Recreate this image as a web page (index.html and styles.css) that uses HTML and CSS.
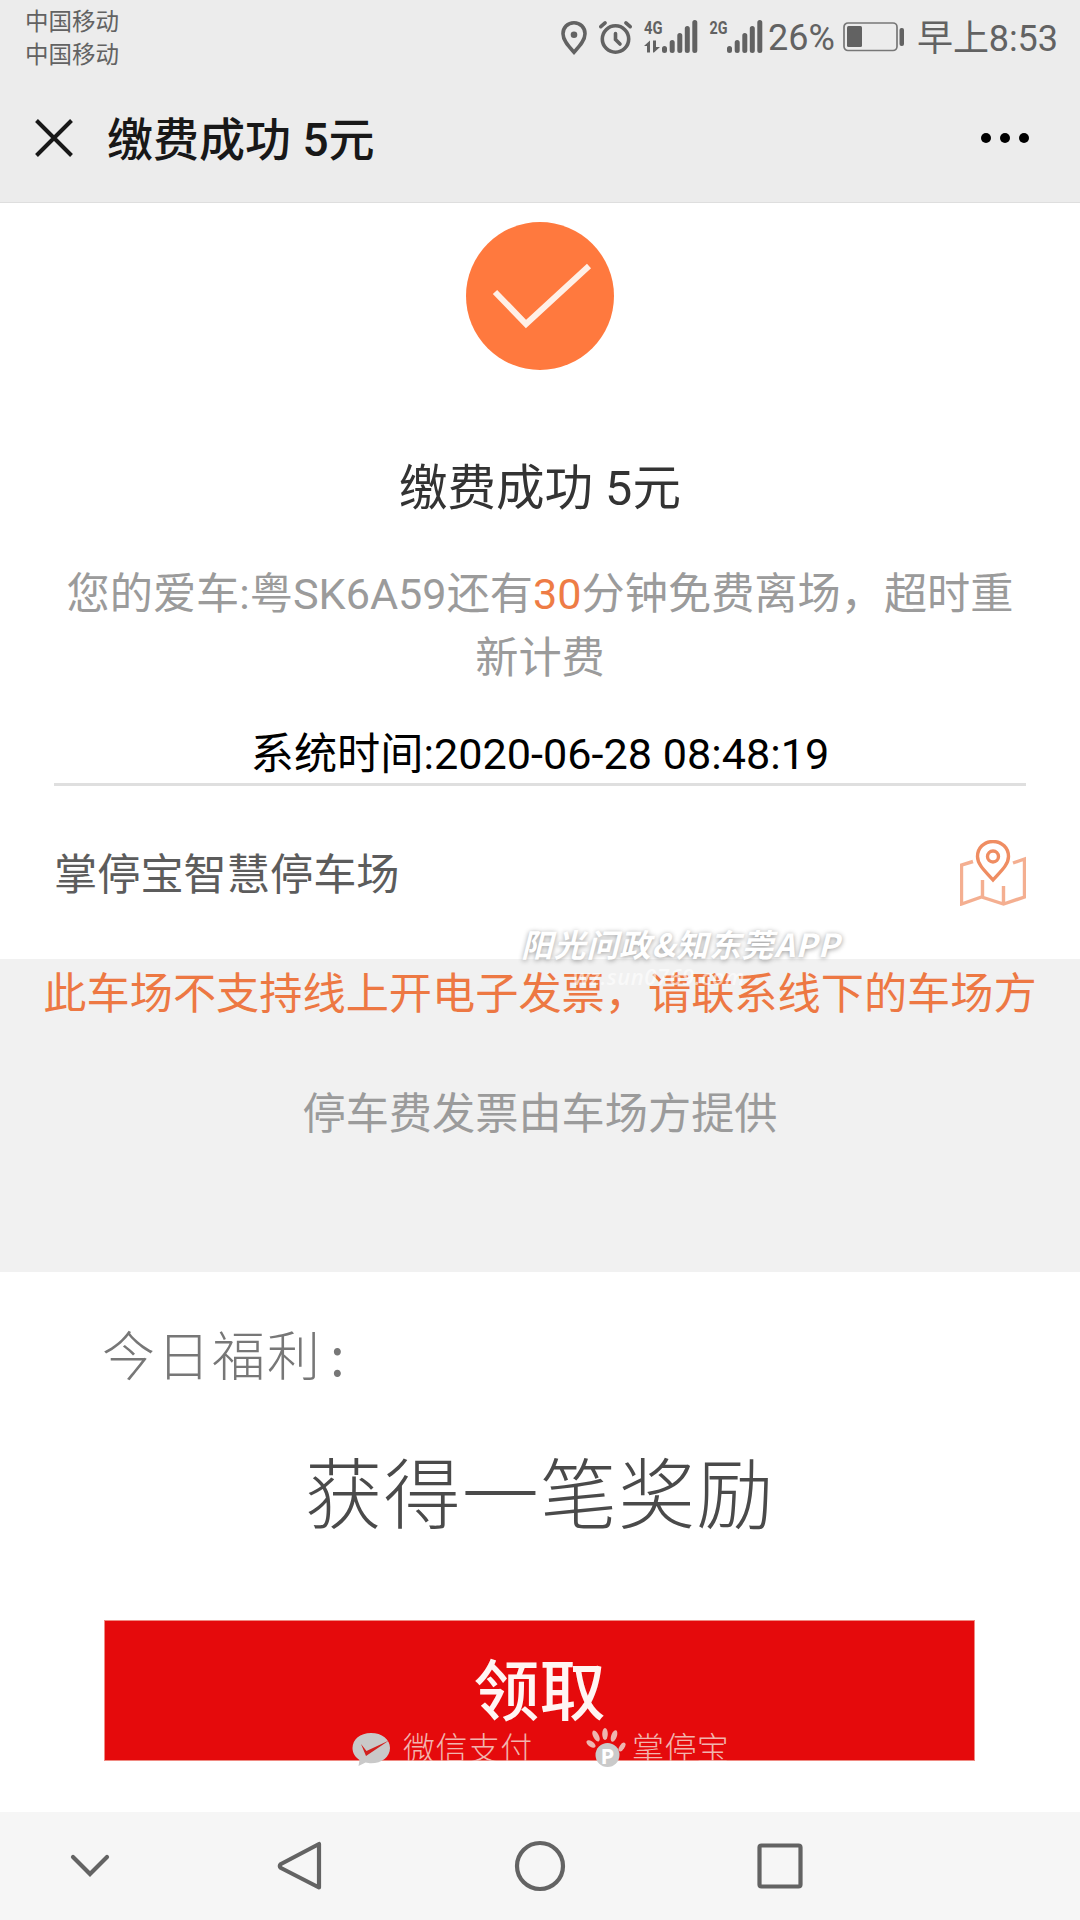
FILE: index.html
```html
<!DOCTYPE html>
<html lang="zh-CN">
<head>
<meta charset="utf-8">
<title>缴费成功 5元</title>
<link rel="stylesheet" href="styles.css">
</head>
<body>
<div class="screen">
  <header class="header">
    <div class="status">
      <div class="carriers"><span>中国移动</span><span>中国移动</span></div>
      <div class="status-right">
        <svg class="indicators" width="208" height="40" viewBox="558 16 208 40">
          <path d="M574 21.7c-6.300 0-11 4.800-11 11 0 7 6 13 11 18.500 5-5.500 11-11.500 11-18.500 0-6.200-4.700-11-11-11z" fill="none" stroke="#626262" stroke-width="3.600"/>
          <circle cx="574" cy="33.700" r="3.300"/>
          <g fill="none" stroke="#626262" stroke-width="3.600" stroke-linecap="round">
            <circle cx="615.500" cy="38" r="13.200"/>
            <path d="M615.500 32.500v6l4.500 4.500M600.800 25.700l4.300-3.800M630.200 25.700l-4.300-3.800"/>
          </g>
          <text x="644" y="33" textLength="18.500" lengthAdjust="spacingAndGlyphs">4G</text>
          <path d="M644 45l6-5.500v12h-3V45zM653 39.500h3V46h4l-6 5.500h-1z"/>
          <path class="bars" d="M664.500 47.500v2M672.200 41.500v8M679.800 34.500v15M687.300 27.500v22M694.800 21.500v28"/>
          <text x="709.500" y="33" textLength="18" lengthAdjust="spacingAndGlyphs">2G</text>
          <path class="bars" d="M729.500 47.500v2M737.200 41.500v8M744.800 34.500v15M752.300 27.500v22M759.800 21.500v28"/>
        </svg>
        <span class="percent">26%</span>
        <svg class="battery" width="62" height="32" viewBox="0 0 62 32">
          <rect x="1" y="2" width="53" height="27.500" rx="4" fill="none" stroke="#777" stroke-width="1.700"/>
          <rect x="4" y="5" width="15" height="21" rx="1.500"/>
          <rect x="56.500" y="7" width="4.500" height="18" rx="2"/>
        </svg>
        <span class="clock">早上8:53</span>
      </div>
    </div>
    <div class="titlebar">
      <svg class="close" width="38" height="38" viewBox="0 0 38 38"><path d="M1.500 1.500l35 35M36.500 1.500l-35 35"/></svg>
      <h1>缴费成功 5元</h1>
      <svg class="more" width="50" height="12" viewBox="0 0 50 12"><circle cx="6" cy="6" r="5"/><circle cx="25" cy="6" r="5"/><circle cx="44" cy="6" r="5"/></svg>
    </div>
  </header>

  <main>
    <section class="result">
      <svg class="success" width="148" height="148" viewBox="0 0 148 148"><circle cx="74" cy="74" r="74"/><path d="M29 70l31 32 63-58"/></svg>
      <h2>缴费成功 5元</h2>
      <p class="notice">您的爱车:粤SK6A59还有<em>30</em>分钟免费离场，超时重新计费</p>
      <p class="time">系统时间:2020-06-28 08:48:19</p>
      <div class="place">
        <span>掌停宝智慧停车场</span>
        <svg width="66" height="66" viewBox="0 0 66 66">
          <path d="M13 21.500L1.500 25v39L21.500 57l22 7L64.500 57V19L53 23M22.500 40v17M43.500 46v18" opacity=".7"/>
          <path d="M33 1.500c-9 0-15.500 6.500-15.500 15C17.500 25 26 32 33 40c7-8 15.500-15 15.500-23.500 0-8.500-6.500-15-15.500-15z"/>
          <circle cx="33" cy="16.500" r="5.500"/>
        </svg>
      </div>
    </section>

    <section class="invoice">
      <p class="warn">此车场不支持线上开电子发票，请联系线下的车场方</p>
      <p class="hint">停车费发票由车场方提供</p>
      <div class="watermark"><span class="wm-name">阳光问政&amp;知东莞APP</span><span class="wm-url">wz.sun0769.com</span></div>
    </section>

    <section class="reward">
      <p class="today">今日福利<span class="colon">:</span></p>
      <p class="prize">获得一笔奖励</p>
      <div class="claim">
        <span class="claim-label">领取</span>
        <div class="brands">
          <svg class="pay" width="40" height="36" viewBox="0 0 40 36"><path d="M19 1C8 1 .5 7.500.5 16c0 5 2.500 9 7 12l-1 6 7-3.500c2 .5 4 .8 5.500.8 11 0 19-6.500 19-15.300S30 1 19 1z" fill="#c9c9c9"/><path d="M9 12l5.500 7L37 8.500 14 24z" fill="#d2201e"/></svg>
          <span class="brand-name wechat">微信支付</span>
          <svg class="paw" width="40" height="40" viewBox="0 0 40 40">
            <g fill="#eeb5b0">
              <ellipse cx="5" cy="16" rx="2.700" ry="5.200" transform="rotate(-55 5 16)"/>
              <ellipse cx="10" cy="8" rx="2.800" ry="6" transform="rotate(-28 10 8)"/>
              <ellipse cx="19" cy="6" rx="2.800" ry="6"/>
              <ellipse cx="28" cy="8" rx="2.800" ry="6" transform="rotate(20 28 8)"/>
              <ellipse cx="36" cy="19" rx="2.500" ry="5" transform="rotate(32 36 19)"/>
            </g>
            <circle cx="21.500" cy="27" r="12" fill="#cacaca"/>
            <text x="14.500" y="35.500">P</text>
          </svg>
          <span class="brand-name">掌停宝</span>
        </div>
      </div>
    </section>
  </main>

  <nav class="navbar">
    <svg width="1080" height="108" viewBox="0 1812 1080 108">
      <path d="M73 1857l17 17 17-17" stroke-linecap="round"/>
      <path d="M319 1844v43.500L281 1868q-2.500-2 0-4z" stroke-linejoin="round"/>
      <circle cx="540" cy="1866" r="23"/>
      <rect x="759.500" y="1845.500" width="41" height="41" rx="2"/>
    </svg>
  </nav>
</div>
</body>
</html>
```
FILE: styles.css
```css
* { box-sizing: border-box; margin: 0; padding: 0; }
body { font-family: Roboto, "Noto Sans CJK SC", sans-serif; background: #fff; font-size: 43.2px; }
svg { display: block; flex: none; }
p, span { white-space: nowrap; }
.screen { width: 1080px; height: 1920px; display: flex; flex-direction: column; overflow: hidden; }

.header { height: 203px; background: #ececec; border-bottom: 1px solid #dedede; }
.status { height: 72px; display: flex; justify-content: space-between; padding: 5px 24px 0 25px; color: #626262; }
.carriers { display: flex; flex-direction: column; padding-top: 1px; font-size: 23.5px; line-height: 33px; }
.status-right { display: flex; align-items: center; height: 63px; font-size: 36px; }
.indicators, .battery { fill: #626262; }
.indicators text { font: 700 19px Roboto, sans-serif; }
.bars { fill: none; stroke: #626262; stroke-width: 5; stroke-linecap: round; }
.percent { width: 77px; padding: 3px 0 0 2px; }
.clock { width: 139px; padding-top: 4px; margin-left: 12px; line-height: 60px; letter-spacing: -.1px; }
.titlebar { display: flex; align-items: center; height: 131px; padding: 0 50px 0 35px; }
.close { fill: none; stroke: #181818; stroke-width: 4; }
.titlebar h1 { flex: 1; padding-top: 5px; margin-left: 34px; font-size: 46px; line-height: 60px; font-weight: 500; color: #181818; }
.more { fill: #000; }

.result { height: 756px; padding: 19px 54px 0; display: flex; flex-direction: column; align-items: center; }
.success circle { fill: #ff793e; }
.success path { fill: none; stroke: #fff0e7; stroke-width: 6; }
.result h2 { margin-top: 87px; font-size: 48.5px; line-height: 64px; font-weight: 400; color: #333; }
.notice { width: 972px; margin-top: 42px; text-align: center; line-height: 64px; color: #9b9b9b; white-space: normal; }
.notice em { font-style: normal; color: #ee7c45; }
.time { width: 972px; margin-top: 32px; height: 63px; line-height: 64px; text-align: center; border-bottom: 3px solid #dfdfdf; color: #000; }
.place { width: 100%; flex: 1; display: flex; align-items: center; justify-content: space-between; color: #5c5c5c; }
.place span { margin-top: -3px; }
.place svg { fill: none; stroke: #ef8d62; stroke-width: 3.4; }

.invoice { position: relative; height: 313px; background: #f1f1f1; text-align: center; }
.warn { padding-top: 4px; line-height: 64px; color: #ed7843; }
.hint { margin-top: 56px; line-height: 64px; color: #9b9b9b; }
.watermark { position: absolute; left: 521px; top: -36px; display: flex; flex-direction: column; align-items: flex-start; color: #fff; font-style: italic; }
.wm-name { font-family: "Noto Sans CJK SC", sans-serif; font-size: 31.8px; line-height: 40px; font-weight: 700; letter-spacing: .9px; text-shadow: 0 1px 5px rgba(0,0,0,.42); }
.wm-url { margin-left: 52px; font: italic 600 22px/26px "Open Sans", sans-serif; letter-spacing: .5px; opacity: .6; }

.reward { height: 540px; display: flex; flex-direction: column; }
.today { margin: 41px 0 0 102px; font: 300 53px/80px "Noto Sans CJK SC", sans-serif; letter-spacing: 2px; color: #777; }
.colon { margin-left: 8px; font-weight: 400; }
.prize { margin-top: 42px; text-align: center; font: 300 77px/110px "Noto Sans CJK SC", sans-serif; letter-spacing: 1.3px; color: #4a4a4a; }
.claim { position: relative; width: 871px; height: 141px; margin: 75px auto 0 104px; border: 1px solid #f08a82; background: #e50a0c; text-align: center; }
.claim-label { display: block; margin-top: 17px; font: 500 66px/96px "Noto Sans CJK SC", sans-serif; color: #fff5f3; }
.brands { position: absolute; left: 247px; top: 107px; height: 42px; display: flex; align-items: flex-start; }
.brand-name { height: 33px; overflow: hidden; font: 300 32px/37px "Noto Sans CJK SC", sans-serif; color: #f2b4ae; letter-spacing: .4px; }
.pay { margin-top: 4px; }
.wechat { width: 134px; margin: 0 49px 0 11px; text-align: left; }
.paw { margin-right: 6px; }
.paw text { font: 700 22px "Open Sans", sans-serif; fill: #fff; }

.navbar { height: 108px; background: #f6f6f6; }
.navbar svg { fill: none; stroke: #636363; stroke-width: 4.2; }
```
